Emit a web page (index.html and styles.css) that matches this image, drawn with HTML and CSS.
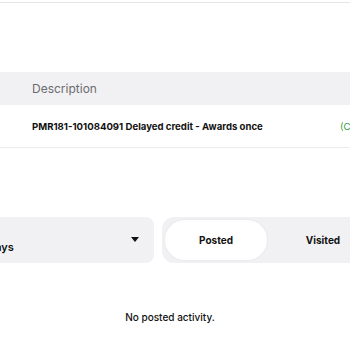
FILE: index.html
```html
<!DOCTYPE html>
<html lang="en">
<head>
    <meta charset="UTF-8">
    <meta name="viewport" content="width=device-width, initial-scale=1.0">
    <title>Activity</title>
    <link rel="stylesheet" href="styles.css">
</head>
<body>

    <!-- Top rule -->
    <div class="top-rule"></div>

    <!-- Transactions table -->
    <div class="table">
        <div class="table-head">
            <span class="col-desc">Description</span>
            <span class="col-amount"></span>
        </div>
        <div class="table-row">
            <span class="col-desc">PMR181-101084091 Delayed credit - Awards once</span>
            <span class="col-amount credit">(Completed)</span>
        </div>
    </div>

    <!-- Filters -->
    <div class="filters">
        <div class="dropdown">
            <span class="dropdown-value">Last 90 days</span>
            <span class="caret"></span>
        </div>
        <div class="segmented">
            <div class="segment active">Posted</div>
            <div class="segment">Visited</div>
        </div>
    </div>

    <!-- Empty state -->
    <div class="empty">No posted activity.</div>

</body>
</html>
```

FILE: styles.css
```css
/* Global Styles */
body {
    margin: 0;
    padding: 0;
    background: #fff;
    font-family: 'Inter', 'Noto Sans', sans-serif;
    color: #111;
    width: 350px;
    height: 350px;
    overflow: hidden;
}

.top-rule {
    height: 2px;
    border-bottom: 1px solid #e6e6e8;
}

/* Table */
.table {
    margin-top: 69px;
    width: 420px;
}

.table-head,
.table-row {
    display: flex;
    align-items: center;
    padding-left: 32px;
}

.table-head {
    height: 33px;
    background: #f1f1f3;
    color: #6b6b70;
    font-size: 12px;
}

.table-row {
    height: 42px;
    border-bottom: 1px solid #ececee;
    font-size: 9.6px;
    font-weight: 700;
}

.col-desc {
    width: 308px;
}

.credit {
    color: #3a9a3a;
    font-weight: 400;
}

/* Filters */
.filters {
    display: flex;
    gap: 8px;
    margin-top: 69px;
    margin-left: -150px;
    width: 560px;
}

.dropdown {
    width: 304px;
    height: 46px;
    background: #f1f1f3;
    border-radius: 8px;
    display: flex;
    align-items: center;
    justify-content: space-between;
    padding: 0 15px 0 96px;
    box-sizing: border-box;
}

.dropdown-value {
    font-size: 11px;
    font-weight: 600;
    padding-top: 14px;
}

.caret {
    width: 0;
    height: 0;
    border-left: 4px solid transparent;
    border-right: 4px solid transparent;
    border-top: 5px solid #111;
    margin-top: -2px;
}

.segmented {
    display: flex;
    background: #f1f1f3;
    border-radius: 12px;
    padding: 3px;
    height: 46px;
    box-sizing: border-box;
}

.segment {
    width: 112px;
    display: flex;
    align-items: center;
    justify-content: center;
    font-size: 10px;
    font-weight: 700;
    border-radius: 20px;
}

.segment.active {
    width: 102px;
    background: #fff;
    box-shadow: 0 0 3px rgba(0, 0, 0, 0.06);
}

/* Empty state */
.empty {
    margin-top: 48px;
    width: 340px;
    text-align: center;
    font-size: 10px;
    font-weight: 500;
}
```
